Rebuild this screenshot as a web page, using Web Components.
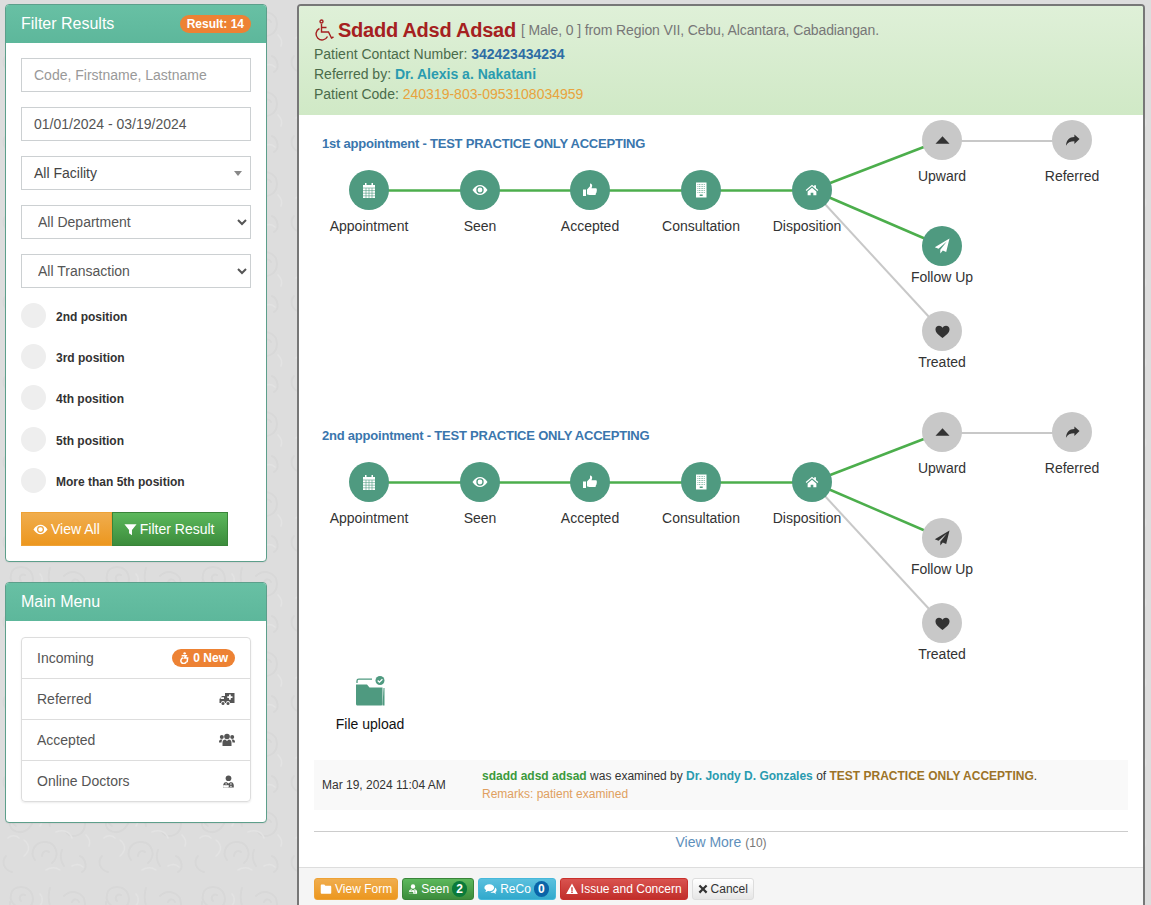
<!DOCTYPE html>
<html>
<head>
<meta charset="utf-8">
<title>Referral</title>
<style>
  html, body { margin: 0; height: 905px; overflow: hidden; }
  body { font: 14px "Liberation Sans", Arial, sans-serif; color: #333; }
</style>
</head>
<body>
<app-page>
  <div slot="side">
    <side-panel heading="Filter Results">
      <pill-badge slot="badge" bold>Result: 14</pill-badge>
      <form-field kind="input" placeholder="Code, Firstname, Lastname"></form-field>
      <form-field kind="input" value="01/01/2024 - 03/19/2024"></form-field>
      <form-field kind="combo" value="All Facility"></form-field>
      <form-field kind="select" value="All Department"></form-field>
      <form-field kind="select" value="All Transaction"></form-field>
      <position-row style="margin-top:15px">2nd position</position-row>
      <position-row>3rd position</position-row>
      <position-row>4th position</position-row>
      <position-row style="margin-top:17px">5th position</position-row>
      <position-row>More than 5th position</position-row>
      <button-group>
        <ui-btn color="orange" big><ui-icon name="eye" size="15"></ui-icon> View All</ui-btn>
        <ui-btn color="green" big style="padding-right:13px"><ui-icon name="filter" size="13"></ui-icon> Filter Result</ui-btn>
      </button-group>
    </side-panel>
    <side-panel heading="Main Menu" style="margin-top:20px">
      <menu-list>
        <menu-item label="Incoming" style="height:40px"><pill-badge bold><ui-icon name="wheelchair" size="12" style="margin-right:-1px"></ui-icon> 0 New</pill-badge></menu-item>
        <menu-item label="Referred"><ui-icon name="ambulance" size="16" style="color:#555"></ui-icon></menu-item>
        <menu-item label="Accepted"><ui-icon name="users" size="16" style="color:#555"></ui-icon></menu-item>
        <menu-item label="Online Doctors"><ui-icon name="doctor" size="13" style="color:#555"></ui-icon></menu-item>
      </menu-list>
    </side-panel>
  </div>
  <main-panel slot="main">
    <patient-header></patient-header>
    <flow-chart heading="1st appointment - TEST PRACTICE ONLY ACCEPTING" followup="on"></flow-chart>
    <flow-chart heading="2nd appointment - TEST PRACTICE ONLY ACCEPTING" style="margin-top:42px"></flow-chart>
    <file-upload></file-upload>
    <activity-row></activity-row>
    <view-more></view-more>
    <action-bar>
      <ui-btn color="orange"><ui-icon name="folder" size="12"></ui-icon> View Form</ui-btn>
      <ui-btn color="green"><ui-icon name="doctor" size="10"></ui-icon> Seen <count-chip style="background:#0a7a3a">2</count-chip></ui-btn>
      <ui-btn color="blue"><ui-icon name="comments" size="13"></ui-icon> ReCo <count-chip style="background:#0a64a8">0</count-chip></ui-btn>
      <ui-btn color="red"><ui-icon name="warning" size="12"></ui-icon> Issue and Concern</ui-btn>
      <ui-btn color="plain"><ui-icon name="times" size="10"></ui-icon> Cancel</ui-btn>
    </action-bar>
  </main-panel>
</app-page>

<script>
const ICONS = {
  calendar: '<path fill="currentColor" d="M2 3h2V1h1.500v2h5V1H12v2h2v13H2z"/><path fill="none" stroke="var(--hole,#4f9a80)" stroke-width=".6" d="M2 6h12M2 8.600h12M2 11.200h12M2 13.800h12M5 6v10M8 6v10M11 6v10"/>',
  eye: '<path fill="currentColor" fill-rule="evenodd" d="M.5 8C2.800 4.600 5.200 3 8 3s5.200 1.600 7.500 5c-2.300 3.400-4.700 5-7.500 5S2.800 11.400.5 8zM8 4.300a3.700 3.700 0 1 0 0 7.400 3.700 3.700 0 0 0 0-7.400zM8 5.600a2.400 2.400 0 1 1 0 4.800 2.400 2.400 0 0 1 0-4.800z"/>',
  thumb: '<path fill="currentColor" d="M1 7.500h3V14H1zM5 7.500l3-3.300V1.500c1.600 0 2.200 1 2.200 2.300 0 1-.5 1.700-.7 2.400h4.300c1.100 0 1.400 1.200.8 1.800.5.600.4 1.400-.2 1.800.3.700 0 1.400-.6 1.600.2.900-.3 1.600-1.200 1.600H8c-1.300 0-2-.6-3-.6z"/>',
  building: '<path fill="currentColor" d="M3 .5h10.500v15H3z"/><path fill="none" stroke="var(--hole,#4f9a80)" stroke-width=".8" stroke-dasharray=".8 .8" d="M4.500 2.500h7.500M4.500 4.500h7.500M4.500 6.500h7.500M4.500 8.500h7.500M4.500 10.500h7.500"/><path fill="var(--hole,#4f9a80)" d="M6.700 12.500h3V14h-3z"/>',
  home: '<path fill="currentColor" d="M8 2 .8 8l.8 1L8 3.800 14.400 9l.8-1-2.700-2.200V2.500h-2v1.600zM3 9.600l5-4.100 5 4.100V14H9.500v-3h-3v3H3z"/>',
  triangle: '<path fill="currentColor" d="M8 3.500l7.500 8H.5z"/>',
  share: '<path fill="currentColor" d="M15.500 6.500 10 1.500v2.700C4.500 4.200 1.500 7.500 1 13.500c1.800-3.300 4.500-4.800 9-4.800v3z"/>',
  send: '<path fill="currentColor" d="M15.500.5 .8 9.300l3.700 1.500 8.300-7.300-6.500 8.200v3.800l2.500-2.900 3.400 1.400z"/>',
  heart: '<path fill="currentColor" d="M8 15C3 11 .5 8.700.5 5.500.5 3.300 2.200 1.800 4.300 1.800 5.900 1.800 7.200 2.700 8 4c.8-1.300 2.100-2.200 3.700-2.200 2.100 0 3.800 1.500 3.800 3.700C15.500 8.700 13 11 8 15z"/>',
  filter: '<path fill="currentColor" d="M.5 1.500h15L9.800 8.500V15L6.200 12.500v-4z"/>',
  folder: '<path fill="currentColor" d="M1 3.500C1 2.700 1.600 2 2.400 2h3.300l1.500 1.800h6.400c.8 0 1.400.6 1.400 1.400V13c0 .8-.6 1.400-1.400 1.400H2.400C1.600 14.400 1 13.800 1 13z"/>',
  doctor: '<circle cx="8" cy="4" r="3.500" fill="currentColor"/><path fill="currentColor" fill-rule="evenodd" d="M1.500 15.500v-3c0-2.500 2-4 4-4L8 10.500l2.500-2c2 0 4 1.500 4 4v3zM4.500 9.500v2.600h1V9.500zM3.400 12.600a1.300 1.300 0 1 0 0 2.400h3.200a1.300 1.300 0 1 0 0-2.400zM10.500 9.500v3h1v-3zM10 13.500v1h2v-1z"/>',
  comments: '<path fill="currentColor" d="M6.500 1.500c3.300 0 6 1.900 6 4.300s-2.700 4.300-6 4.300c-.7 0-1.300-.1-1.900-.2-.9.8-2 1.200-3.200 1.300.7-.7 1.100-1.500 1.200-2.300C1.300 7.800.5 6.900.5 5.800.5 3.400 3.200 1.500 6.500 1.500z"/><path fill="currentColor" d="M13.500 5.500c1.300.7 2 1.800 2 3 0 1-.6 2-1.500 2.600.1.700.4 1.300 1 1.900-1-.1-1.900-.4-2.700-1.100-.5.100-1 .1-1.500.1-1.100 0-2.100-.2-3-.7 3.300 0 5.900-2.500 5.700-5.800z"/>',
  warning: '<path fill="currentColor" fill-rule="evenodd" d="M8 .8 15.800 14.800H.2zM7 5.500l.2 5h1.600l.2-5zM7 11.400v1.800h2v-1.800z"/>',
  times: '<path fill="currentColor" d="M3.500 1 8 5.500 12.500 1 15 3.500 10.500 8l4.500 4.500-2.500 2.500L8 10.500 3.500 15 1 12.500 5.500 8 1 3.500z"/>',
  users: '<circle cx="8" cy="4.500" r="2.800" fill="currentColor"/><circle cx="2.800" cy="5" r="2" fill="currentColor"/><circle cx="13.200" cy="5" r="2" fill="currentColor"/><path fill="currentColor" d="M3.500 14v-3.500c0-1.800 1.300-3 2.800-3L8 9l1.700-1.500c1.500 0 2.800 1.200 2.800 3V14zM0 10c0-1.300.8-2.500 2-2.500h1.500c-.6.700-1 1.700-1 3H0zM16 10c0-1.300-.8-2.500-2-2.500h-1.500c.6.700 1 1.700 1 3H16z"/>',
  ambulance: '<path fill="currentColor" fill-rule="evenodd" d="M6 2h9.500v10H11a2 2 0 0 0-4 0H6a2 2 0 0 0-4 0H.5V8L3 5h3zM2 6.300 1.500 8H5V6.300zM10 3.500v1.800H8.300v1.700H10v1.800h1.800V7h1.700V5.300h-1.700V3.500z"/><circle cx="4" cy="12.500" r="1.500" fill="currentColor"/><circle cx="9" cy="12.500" r="1.500" fill="currentColor"/>',
  wheelchair: '<circle cx="7.500" cy="1.800" r="1.600" fill="currentColor"/><path fill="none" stroke="currentColor" stroke-width="2" d="M3.500 5h6L7.500 8h4l-.7 5.500M5.600 7.800a3.800 3.800 0 1 0 4.200 5.200"/>'
};

class UiIcon extends HTMLElement {
  connectedCallback() {
    const size = this.getAttribute('size') || 14;
    if (this.shadowRoot) return;
    this.attachShadow({ mode: 'open' }).innerHTML = `
      <style>:host { display: inline-block; width: ${size}px; height: ${size}px; vertical-align: -2px; line-height: 0; }</style>
      <svg width="${size}" height="${size}" viewBox="0 0 16 16">${ICONS[this.getAttribute('name')] || ''}</svg>`;
  }
}

class AppPage extends HTMLElement {
  constructor() {
    super();
    this.attachShadow({ mode: 'open' }).innerHTML = `
      <style>
        :host { display: flex; gap: 30px; position: relative; height: 905px; padding: 4px 6px 0 5px; box-sizing: border-box; background: #dddddd; overflow: hidden; }
        .bg { position: absolute; inset: 0; width: 100%; height: 100%; }
        .side { position: relative; width: 262px; flex: none; }
        .main { position: relative; flex: 1; min-width: 0; }
      </style>
      <svg class="bg">
        <defs>
          <pattern id="damask" width="96" height="80" patternUnits="userSpaceOnUse">
            <g fill="none" stroke="#d8d8d8" stroke-width="2" stroke-linecap="round">
              <path d="M16 26c-9-6-6-19 5-19s16 13 8 21-21 3-19-6"/>
              <path d="M21 21c-3-3 0-8 4-6"/>
              <path d="M64 16c8-8 21-3 21 8s-13 16-19 8"/>
              <path d="M72 22c2-4 6-3 7 0"/>
              <path d="M35 60c-6-8 0-19 11-18s14 14 6 21"/>
              <path d="M42 56c0-5 5-6 7-4"/>
              <path d="M80 56c6 3 8 13 2 16M6 56c-5 6-2 14 6 16M50 8c-2 6-2 11 0 18M62 50c-2 5-2 10 2 16"/>
            </g>
            <g fill="none" stroke="#e3e3e3" stroke-width="1.500" stroke-linecap="round">
              <path d="M24 40c6 5 6 11 0 16M56 32c8-3 14 0 16 6M8 38c3-3 8-3 11 0M86 35c3 3 5 6 3 11M46 70c5-3 10-3 14 0M40 14c3 3 3 8 0 12M72 66c4-2 8-2 11 1"/>
            </g>
          </pattern>
        </defs>
        <rect width="100%" height="100%" fill="url(#damask)"/>
      </svg>
      <div class="side"><slot name="side"></slot></div>
      <div class="main"><slot name="main"></slot></div>`;
  }
}

class SidePanel extends HTMLElement {
  constructor() {
    super();
    this.attachShadow({ mode: 'open' }).innerHTML = `
      <style>
        :host { display: block; background: #fff; border: 1px solid #5d9f8b; border-radius: 4px; box-sizing: border-box; box-shadow: 0 1px 1px rgba(0,0,0,.05); overflow: hidden; }
        .head { display: flex; align-items: center; justify-content: space-between; height: 38px; padding: 0 15px; background: linear-gradient(#68c0a4, #5db79b); color: #fff; font-size: 16px; }
        .body { padding: 15px; }
      </style>
      <div class="head"><span id="t"></span><slot name="badge"></slot></div>
      <div class="body"><slot></slot></div>`;
  }
  connectedCallback() {
    this.shadowRoot.getElementById('t').textContent = this.getAttribute('heading');
  }
}

class PillBadge extends HTMLElement {
  constructor() {
    super();
    this.attachShadow({ mode: 'open' }).innerHTML = `
      <style>
        :host { display: inline-block; background: #ed8234; color: #fff; font-size: 12px; font-weight: bold; line-height: 12px; padding: 3px 7px; border-radius: 10px; white-space: nowrap; }
      </style><slot></slot>`;
  }
}

class FormField extends HTMLElement {
  connectedCallback() {
    if (this.shadowRoot) return;
    const kind = this.getAttribute('kind');
    const value = this.getAttribute('value') || '';
    const ph = this.getAttribute('placeholder') || '';
    let inner = `<input placeholder="${ph}" value="${value}">`;
    if (kind === 'select') inner = `<select><option>${value}</option></select>`;
    if (kind === 'combo') inner = `<div class="combo"><span>${value}</span><i></i></div>`;
    this.attachShadow({ mode: 'open' }).innerHTML = `
      <style>
        :host { display: block; margin-bottom: 15px; }
        input, select, .combo { display: block; width: 100%; height: 34px; box-sizing: border-box; border: 1px solid #ccd0d2; border-radius: 0; background: #fff; color: #555; font: 14px "Liberation Sans", Arial, sans-serif; padding: 0 12px; outline: none; }
        input::placeholder { color: #999; }
        select { padding: 0 0 0 12px; }
        .combo { display: flex; align-items: center; justify-content: space-between; color: #444; }
        .combo i { width: 0; height: 0; border: 4px solid transparent; border-top: 5px solid #888; border-bottom: 0; margin-right: -4px; }
      </style>${inner}`;
  }
}

class PositionRow extends HTMLElement {
  constructor() {
    super();
    this.attachShadow({ mode: 'open' }).innerHTML = `
      <style>
        :host { display: flex; align-items: center; gap: 10px; height: 25px; margin-top: 16px; font-size: 12px; font-weight: bold; color: #333; }
        i { width: 25px; height: 25px; border-radius: 50%; background: #eee; flex: none; }
        span { position: relative; top: 1px; }
      </style>
      <i></i><span><slot></slot></span>`;
  }
}

class ButtonGroup extends HTMLElement {
  constructor() {
    super();
    this.attachShadow({ mode: 'open' }).innerHTML = `
      <style>:host { display: flex; margin-top: 19px; }</style><slot></slot>`;
  }
}

class UiBtn extends HTMLElement {
  constructor() {
    super();
    this.attachShadow({ mode: 'open' }).innerHTML = `
      <style>
        :host { display: inline-flex; align-items: center; gap: 3px; height: 22px; padding: 0 5px; box-sizing: border-box; font-size: 12px; color: #fff; border: 1px solid; border-radius: 3px; white-space: nowrap; }
        :host([big]) { height: 34px; padding: 0 11px; font-size: 14px; border-radius: 0; }
        :host([color=orange]) { background: linear-gradient(#f0ad4e, #ec971f); border-color: #eea236; }
        :host([color=green]) { background: linear-gradient(#5cb85c, #3c8c3c); border-color: #398439; }
        :host([color=blue]) { background: linear-gradient(#5bc0de, #31a9cc); border-color: #46b8da; }
        :host([color=red]) { background: linear-gradient(#d9534f, #c12e2a); border-color: #c9302c; }
        :host([color=plain]) { background: linear-gradient(#fff, #e6e6e6); border-color: #ddd; color: #333; }
      </style><slot></slot>`;
  }
}

class CountChip extends HTMLElement {
  constructor() {
    super();
    this.attachShadow({ mode: 'open' }).innerHTML = `
      <style>:host { display: inline-block; min-width: 7px; padding: 2px 4px; margin-right: 1px; border-radius: 9px; font-size: 12px; font-weight: bold; line-height: 12px; color: #fff; text-align: center; }</style><slot></slot>`;
  }
}

class MenuList extends HTMLElement {
  constructor() {
    super();
    this.attachShadow({ mode: 'open' }).innerHTML = `
      <style>:host { display: block; border: 1px solid #ddd; border-radius: 4px; box-shadow: 0 1px 2px rgba(0,0,0,.08); margin: 1px 0 5px; }</style><slot></slot>`;
  }
}

class MenuItem extends HTMLElement {
  constructor() {
    super();
    this.attachShadow({ mode: 'open' }).innerHTML = `
      <style>
        :host { display: flex; align-items: center; justify-content: space-between; height: 41px; padding: 0 15px; box-sizing: border-box; color: #555; }
        :host(:not(:first-child)) { border-top: 1px solid #ddd; }
      </style>
      <span id="l"></span><slot></slot>`;
  }
  connectedCallback() {
    this.shadowRoot.getElementById('l').textContent = this.getAttribute('label');
  }
}

class MainPanel extends HTMLElement {
  constructor() {
    super();
    this.attachShadow({ mode: 'open' }).innerHTML = `
      <style>
        :host { display: flex; flex-direction: column; height: 920px; background: #fff; border: 2px solid #777; border-radius: 4px; box-sizing: border-box; overflow: hidden; }
        ::slotted(*) { flex: none; }
      </style><slot></slot>`;
  }
}

class PatientHeader extends HTMLElement {
  constructor() {
    super();
    this.attachShadow({ mode: 'open' }).innerHTML = `
      <style>
        :host { display: block; height: 109px; padding: 9px 15px 0; box-sizing: border-box; background: linear-gradient(#dff0d8, #d0e9c6); color: #4a6b4a; line-height: 20px; }
        .top { display: flex; align-items: center; height: 29px; color: #777; white-space: pre; letter-spacing: -.12px; }
        .name { font-size: 20px; font-weight: bold; color: #a52020; margin: 0 5px 0 4px; letter-spacing: -.25px; }
        .wc { color: #a52020; }
        .blue { color: #2e6da4; font-weight: bold; }
        .teal { color: #2a9bb0; font-weight: bold; }
        .code { color: #e8a33d; }
      </style>
      <div class="top"><svg class="wc" width="20" height="22" viewBox="0 0 20 22" fill="none" stroke="currentColor" stroke-width="1.400"><circle cx="7.500" cy="2.500" r="1.500"/><path d="M7.500 5v8h7l3 6 2-1"/><path d="M7.500 8.500h5"/><path d="M5.500 9.500a6 6 0 1 0 8 8"/></svg><span class="name">Sdadd Adsd Adsad</span><span>[ Male, 0 ] from Region VII, Cebu, Alcantara, Cabadiangan.</span></div>
      <div>Patient Contact Number: <span class="blue">342423434234</span></div>
      <div>Referred by: <span class="teal">Dr. Alexis a. Nakatani</span></div>
      <div>Patient Code: <span class="code">240319-803-0953108034959</span></div>`;
  }
}

class FlowStep extends HTMLElement {
  constructor() {
    super();
    this.attachShadow({ mode: 'open' });
  }
  connectedCallback() {
    const x = +this.getAttribute('x'), y = +this.getAttribute('y');
    const on = this.hasAttribute('on');
    const dy = this.getAttribute('dy') || 36;
    const dx = this.getAttribute('dx') || 0;
    this.shadowRoot.innerHTML = `
      <style>
        :host { position: absolute; left: ${x - 20}px; top: ${y - 20}px; width: 40px; height: 40px; }
        .dot { display: flex; align-items: center; justify-content: center; width: 40px; height: 40px; border-radius: 50%; background: ${on ? '#4f9a80' : '#c8c8c8'}; color: ${on ? '#fff' : '#333'}; --hole: #4f9a80; }
        .label { position: absolute; left: 50%; top: ${+dy + 10}px; height: 20px; line-height: 20px; transform: translateX(calc(-50% + ${dx}px)); white-space: nowrap; color: #333; }
      </style>
      <div class="dot"><ui-icon name="${this.getAttribute('icon')}" size="${this.getAttribute('isize') || 16}"></ui-icon></div>
      <div class="label">${this.getAttribute('label')}</div>`;
  }
}

class FlowChart extends HTMLElement {
  constructor() {
    super();
    this.attachShadow({ mode: 'open' });
  }
  connectedCallback() {
    const fu = this.getAttribute('followup') === 'on';
    const GREEN = '#4cae4c', GREY = '#c8c8c8';
    this.shadowRoot.innerHTML = `
      <style>
        :host { display: block; position: relative; height: 250px; margin-top: 6px; }
        h4 { margin: 0; padding: 15px 0 0 23px; font-size: 13px; line-height: 16px; font-weight: bold; color: #3a76ad; letter-spacing: -.22px; }
        svg { position: absolute; left: 0; top: 0; }
      </style>
      <h4>${this.getAttribute('heading')}</h4>
      <svg width="846" height="250">
        <line x1="70" y1="69.500" x2="513" y2="69.500" stroke="${GREEN}" stroke-width="2.500"/>
        <line x1="513" y1="69" x2="643" y2="19" stroke="${GREEN}" stroke-width="2.500"/>
        <line x1="513" y1="69" x2="643" y2="125" stroke="${GREEN}" stroke-width="2.500"/>
        <line x1="513" y1="69" x2="643" y2="210" stroke="${GREY}" stroke-width="2"/>
        <line x1="643" y1="20" x2="773" y2="20" stroke="${GREY}" stroke-width="2"/>
      </svg>
      <flow-step x="70" y="69" on icon="calendar" label="Appointment"></flow-step>
      <flow-step x="181" y="69" on icon="eye" label="Seen"></flow-step>
      <flow-step x="291" y="69" on icon="thumb" label="Accepted"></flow-step>
      <flow-step x="402" y="69" on icon="building" label="Consultation"></flow-step>
      <flow-step x="513" y="69" on icon="home" isize="14" label="Disposition" dx="-5"></flow-step>
      <flow-step x="643" y="19" icon="triangle" isize="15" label="Upward"></flow-step>
      <flow-step x="773" y="19" icon="share" isize="15" label="Referred"></flow-step>
      <flow-step x="643" y="125" ${fu ? 'on' : ''} icon="send" label="Follow Up" dy="31"></flow-step>
      <flow-step x="643" y="210" icon="heart" isize="15" label="Treated" dy="31"></flow-step>`;
  }
}

class FileUpload extends HTMLElement {
  constructor() {
    super();
    this.attachShadow({ mode: 'open' }).innerHTML = `
      <style>
        :host { display: flex; flex-direction: column; align-items: center; width: 112px; margin: 13px 0 0 15px; color: #111; line-height: 20px; }
        svg { display: block; margin-bottom: 5px; }
      </style>
      <svg width="32" height="33" viewBox="0 0 32 33">
        <path fill="#4f9a80" d="M2 8.500h11l2.500 3H28.500V28c0 .8-.6 1.500-1.500 1.500H3.500C2.600 29.500 2 28.800 2 28z"/>
        <path fill="none" stroke="#4f9a80" stroke-width="1.300" d="M3 7V5c0-1 .7-1.800 1.800-1.800H18"/>
        <path fill="#4f9a80" d="M29.500 12h1v17.500h-2z"/>
        <circle cx="26" cy="4.500" r="4.500" fill="#4f9a80"/>
        <path fill="none" stroke="#fff" stroke-width="1.300" d="M23.700 4.500l1.700 1.700 3-3"/>
      </svg>
      <div>File upload</div>`;
  }
}

class ActivityRow extends HTMLElement {
  constructor() {
    super();
    this.attachShadow({ mode: 'open' }).innerHTML = `
      <style>
        :host { display: flex; align-items: center; height: 50px; margin: 26px 15px 0; padding: 0 8px; background: #f9f9f9; font-size: 12px; color: #333; }
        .when { width: 160px; flex: none; }
        .l { line-height: 18px; }
        .g { color: #3c9a3c; font-weight: bold; }
        .t { color: #2a9bb0; font-weight: bold; }
        .b { color: #9c7328; font-weight: bold; }
        .r { color: #e0a060; }
      </style>
      <div class="when">Mar 19, 2024 11:04 AM</div>
      <div>
        <div class="l"><span class="g">sdadd adsd adsad</span> was examined by <span class="t">Dr. Jondy D. Gonzales</span> of <span class="b">TEST PRACTICE ONLY ACCEPTING</span>.</div>
        <div class="l r">Remarks: patient examined</div>
      </div>`;
  }
}

class ViewMore extends HTMLElement {
  constructor() {
    super();
    this.attachShadow({ mode: 'open' }).innerHTML = `
      <style>
        :host { display: block; height: 21px; box-sizing: border-box; margin: 21px 15px 0; border-top: 1px solid #ccc; text-align: center; line-height: 20px; }
        span { color: #5e8fbb; }
        small { font-size: 12px; color: #777; }
      </style>
      <span>View More</span> <small>(10)</small>`;
  }
}

class ActionBar extends HTMLElement {
  constructor() {
    super();
    this.attachShadow({ mode: 'open' }).innerHTML = `
      <style>
        :host { display: flex; align-items: flex-start; gap: 4px; height: 60px; margin-top: 15px; padding: 10px 15px 0; box-sizing: border-box; background: #f5f5f5; border-top: 1px solid #ddd; }
      </style><slot></slot>`;
  }
}

customElements.define('ui-icon', UiIcon);
customElements.define('app-page', AppPage);
customElements.define('side-panel', SidePanel);
customElements.define('pill-badge', PillBadge);
customElements.define('form-field', FormField);
customElements.define('position-row', PositionRow);
customElements.define('button-group', ButtonGroup);
customElements.define('ui-btn', UiBtn);
customElements.define('count-chip', CountChip);
customElements.define('menu-list', MenuList);
customElements.define('menu-item', MenuItem);
customElements.define('main-panel', MainPanel);
customElements.define('patient-header', PatientHeader);
customElements.define('flow-step', FlowStep);
customElements.define('flow-chart', FlowChart);
customElements.define('file-upload', FileUpload);
customElements.define('activity-row', ActivityRow);
customElements.define('view-more', ViewMore);
customElements.define('action-bar', ActionBar);
</script>
</body>
</html>
